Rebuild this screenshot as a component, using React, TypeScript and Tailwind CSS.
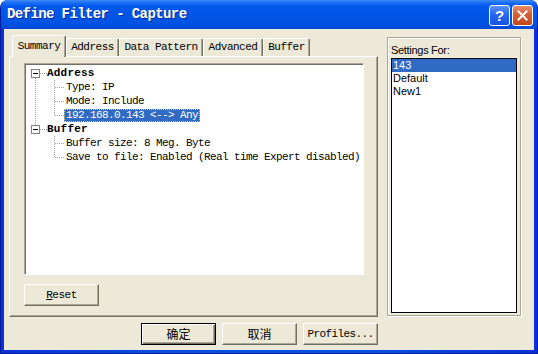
import React from "react";

const DOT = "#A0A0A0";
const mono = "font-['Liberation_Mono',monospace]";

function VL({ x, y1, y2 }: { x: number; y1: number; y2: number }) {
  return (
    <line x1={x + 0.5} x2={x + 0.5} y1={y1} y2={y2} stroke={DOT} strokeDasharray="1 1" shapeRendering="crispEdges" />
  );
}
function HL({ x1, x2, y }: { x1: number; x2: number; y: number }) {
  return (
    <line x1={x1} x2={x2} y1={y + 0.5} y2={y + 0.5} stroke={DOT} strokeDasharray="1 1" shapeRendering="crispEdges" />
  );
}

function RootRow({ label, first }: { label: string; first: boolean }) {
  return (
    <div className="flex h-[14px] items-start">
      <svg width="22" height="14" className="shrink-0">
        {first ? <VL x={10} y1={12} y2={14} /> : <VL x={10} y1={0} y2={3} />}
        <HL x1={15} x2={22} y={7} />
        <rect x="6.5" y="3.5" width="8" height="8" fill="white" stroke="#808080" shapeRendering="crispEdges" />
        <rect x="8" y="7" width="5" height="1" fill="black" />
      </svg>
      <span className={`${mono} text-[11px] leading-[14px] font-bold tracking-[0.2px] text-black whitespace-pre`}>{label}</span>
    </div>
  );
}

function ChildRow({
  label,
  rootLine,
  last,
  selected,
}: {
  label: string;
  rootLine: boolean;
  last: boolean;
  selected?: boolean;
}) {
  return (
    <div className="flex h-[14px] items-start">
      <svg width="39" height="14" className="shrink-0">
        {rootLine && <VL x={10} y1={0} y2={14} />}
        <VL x={29} y1={0} y2={last ? 8 : 14} />
        <HL x1={30} x2={39} y={7} />
      </svg>
      {selected ? (
        <span
          className={`${mono} mt-[1px] h-[13px] px-[1px] text-[11px] leading-[11px] tracking-[-0.6px] text-white whitespace-pre bg-[#316AC5] border border-dotted border-[#E8C97A]`}
        >
          {label}
        </span>
      ) : (
        <span className={`${mono} px-[2px] text-[11px] leading-[14px] tracking-[-0.6px] text-black whitespace-pre`}>
          {label}
        </span>
      )}
    </div>
  );
}

function Tab({ label, w, selected }: { label: string; w: string; selected?: boolean }) {
  return (
    <div
      className={`${w} ${
        selected ? "relative z-10 h-[22px] -mb-[1px] pt-[4px]" : "h-[18px] pt-[2px]"
      } flex justify-center rounded-t-[2px] border-l border-t border-r border-l-white border-t-white border-r-[#716F64] bg-[#ECE9D8] shadow-[inset_-1px_0_0_#ACA899]`}
    >
      <span className={`${mono} text-[11px] leading-[13px] tracking-[-0.5px] text-black whitespace-pre`}>{label}</span>
    </div>
  );
}

function Btn({ children, def, w = "w-[75px]" }: { children: React.ReactNode; def?: boolean; w?: string }) {
  return (
    <div
      className={`${w} h-[22px] flex items-center justify-center bg-[#ECE9D8] ${
        def
          ? "border border-black shadow-[inset_1px_1px_0_white,inset_-1px_-1px_0_#716F64,inset_-2px_-2px_0_#ACA899]"
          : "border border-t-white border-l-white border-r-[#716F64] border-b-[#716F64] shadow-[inset_-1px_-1px_0_#ACA899]"
      }`}
    >
      {children}
    </div>
  );
}

export default function App() {
  return (
    <div className="w-[538px] h-[354px] flex flex-col rounded-t-[8px] overflow-hidden bg-[linear-gradient(to_right,#0831D9,#0A4DE3_30%,#0A4DE3_70%,#0831D9)] border border-t-0 border-[#0019A0]">
      {/* Title bar */}
      <div className="h-[29px] shrink-0 flex items-center pl-[6px] pr-[4px] bg-[linear-gradient(to_bottom,#3D8CF7_0%,#1A6CF5_10%,#0058EE_22%,#0055E5_50%,#0053E3_80%,#0048D4_100%)]">
        <span
          className={`${mono} text-[14px] font-bold tracking-[-0.6px] text-white [text-shadow:1px_1px_0_#0A2A9C] flex-1 whitespace-pre`}
        >
          Define Filter - Capture
        </span>
        <div className="flex gap-[2px] mt-[1px]">
          <div className="w-[21px] h-[21px] rounded-[3px] border border-white bg-[linear-gradient(to_bottom,#5A91F8,#2A68F0_45%,#1653E0)] flex items-center justify-center">
            <span className="font-['Liberation_Sans',sans-serif] font-bold text-[15px] leading-[15px] text-white">?</span>
          </div>
          <div className="w-[21px] h-[21px] rounded-[3px] border border-white bg-[linear-gradient(to_bottom,#E98C6B,#D85F35_45%,#C4441A)] flex items-center justify-center">
            <svg width="11" height="11" viewBox="0 0 11 11">
              <path d="M1.5 1.5 L9.5 9.5 M9.5 1.5 L1.5 9.5" stroke="white" strokeWidth="2" strokeLinecap="square" />
            </svg>
          </div>
        </div>
      </div>

      {/* Body */}
      <div className="flex-1 mx-[3px] mb-[3px] bg-[#ECE9D8] flex pl-[5px] pt-[6px]">
        {/* Left column */}
        <div className="w-[369px] flex flex-col">
          <div className="h-[21px] flex items-end pl-[3px]">
            <Tab label="Summary" w="w-[54px]" selected />
            <Tab label="Address" w="w-[53px]" />
            <Tab label="Data Pattern" w="w-[84px]" />
            <Tab label="Advanced" w="w-[60px]" />
            <Tab label="Buffer" w="w-[47px]" />
          </div>
          <div className="h-[261px] border border-t-white border-l-white border-r-[#716F64] border-b-[#716F64] shadow-[inset_-1px_-1px_0_#ACA899] pl-[14px] pt-[6px] flex flex-col">
            <div className="w-[340px] h-[212px] bg-white border border-t-[#ACA899] border-l-[#ACA899] border-r-white border-b-white shadow-[inset_1px_1px_0_#716F64] pt-[2px]">
              <RootRow label="Address" first />
              <ChildRow label="Type: IP" rootLine last={false} />
              <ChildRow label="Mode: Include" rootLine last={false} />
              <ChildRow label="192.168.0.143 <--> Any" rootLine last selected />
              <RootRow label="Buffer" first={false} />
              <ChildRow label="Buffer size: 8 Meg. Byte" rootLine={false} last={false} />
              <ChildRow label="Save to file: Enabled (Real time Expert disabled)" rootLine={false} last />
            </div>
            <div className="mt-[9px]">
              <Btn w="w-[75px]">
                <span className={`${mono} text-[11px] tracking-[-0.5px] text-black`}>
                  <span className="underline">R</span>eset
                </span>
              </Btn>
            </div>
          </div>
          <div className="mt-[6px] flex justify-end gap-[6px]">
            <Btn def>
              <span className="font-['Noto_Sans_CJK_SC',sans-serif] text-[12px] leading-[14px] text-black">确定</span>
            </Btn>
            <Btn>
              <span className="font-['Noto_Sans_CJK_SC',sans-serif] text-[12px] leading-[14px] text-black">取消</span>
            </Btn>
            <Btn>
              <span className={`${mono} text-[11px] tracking-[-0.6px] text-black whitespace-pre`}>Profiles...</span>
            </Btn>
          </div>
        </div>

        {/* Right group */}
        <div className="ml-[9px] mt-[2px] w-[134px] h-[279px] border border-[#ACA899] shadow-[1px_1px_0_white,inset_1px_1px_0_white] px-[3px] pt-[6px] pb-[2px] flex flex-col">
          <span className="font-['Liberation_Sans',sans-serif] text-[11px] leading-[13px] text-black tracking-[-0.3px]">
            Settings For:
          </span>
          <div className="mt-[1px] flex-1 bg-white border border-black shadow-[0_0_0_1px_#F1EFE2] flex flex-col">
            <div className="h-[13px] bg-[#316AC5] text-white font-['Liberation_Sans',sans-serif] text-[11px] leading-[13px] pl-[1px]">
              143
            </div>
            <div className="h-[13px] text-black font-['Liberation_Sans',sans-serif] text-[11px] leading-[13px] pl-[1px]">
              Default
            </div>
            <div className="h-[13px] text-black font-['Liberation_Sans',sans-serif] text-[11px] leading-[13px] pl-[1px]">
              New1
            </div>
          </div>
        </div>
      </div>
    </div>
  );
}
